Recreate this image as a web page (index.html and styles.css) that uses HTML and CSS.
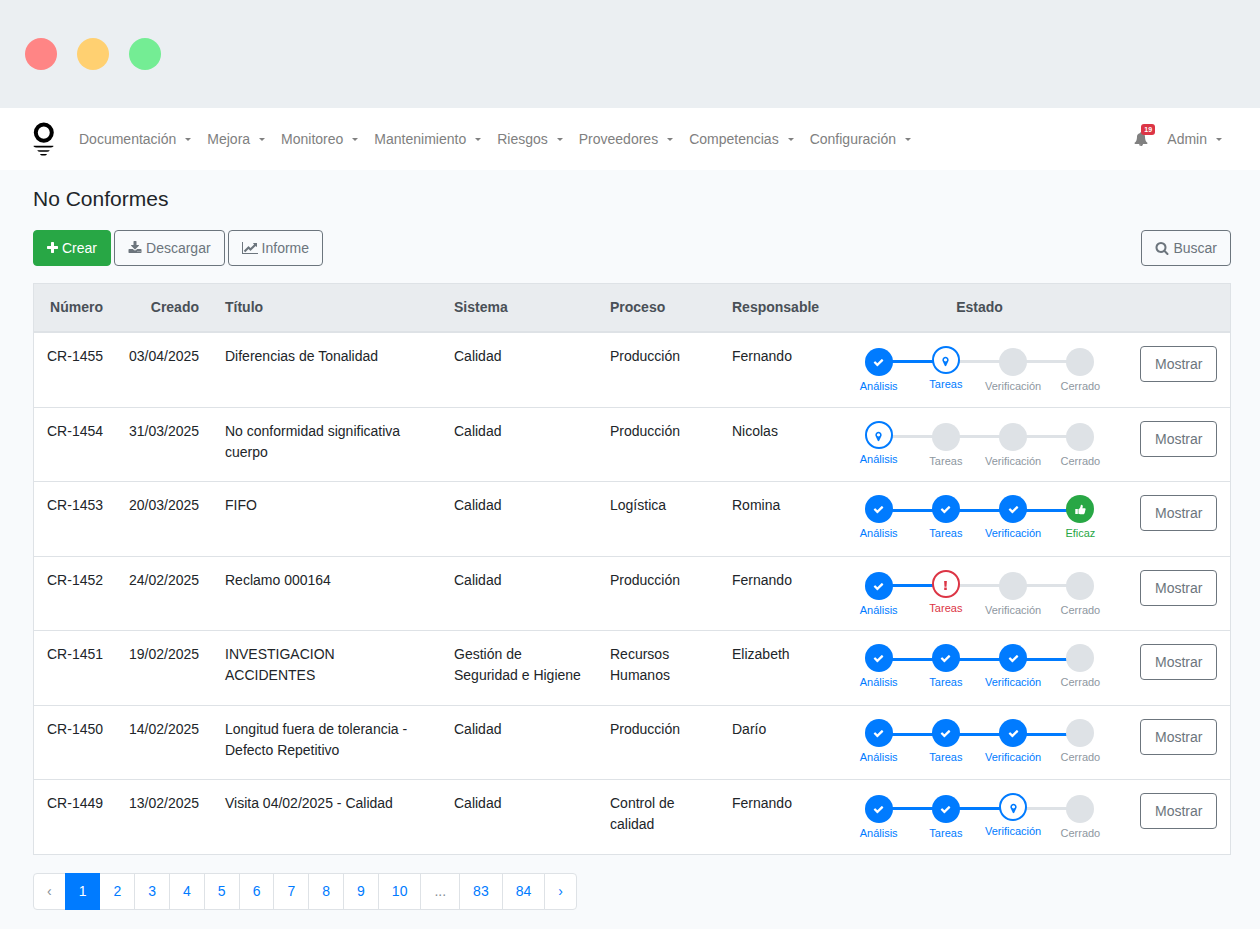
FILE: index.html
```html
<!DOCTYPE html>
<html lang="es">
<head>
<meta charset="UTF-8">
<meta name="viewport" content="width=device-width, initial-scale=1.0">
<title>No Conformes</title>
<link rel="stylesheet" href="styles.css">
</head>
<body>

<!-- Icon set -->
<svg class="sprite" aria-hidden="true">
  <symbol id="plus" viewBox="192 0 1408 1792"><path d="M1600 736v192q0 40-28 68t-68 28h-416v416q0 40-28 68t-68 28h-192q-40 0-68-28t-28-68v-416h-416q-40 0-68-28t-28-68v-192q0-40 28-68t68-28h416v-416q0-40 28-68t68-28h192q40 0 68 28t28 68v416h416q40 0 68 28t28 68z"/></symbol>
  <symbol id="download" viewBox="0 0 1792 1792"><path d="M1344 1344q0-26-19-45t-45-19-45 19-19 45 19 45 45 19 45-19 19-45zm256 0q0-26-19-45t-45-19-45 19-19 45 19 45 45 19 45-19 19-45zm128-224v320q0 40-28 68t-68 28h-1472q-40 0-68-28t-28-68v-320q0-40 28-68t68-28h465l135 136q58 56 136 56t136-56l136-136h464q40 0 68 28t28 68zm-325-569q17 41-14 70l-448 448q-18 19-45 19t-45-19l-448-448q-31-29-14-70 17-39 59-39h256v-448q0-26 19-45t45-19h256q26 0 45 19t19 45v448h256q42 0 59 39z"/></symbol>
  <symbol id="chart" viewBox="0 0 2048 1792"><path d="M2048 1536v128h-2048v-1536h128v1408h1920zm-128-1248v435q0 21-19.5 29.5t-35.5-7.5l-121-121-633 633q-10 10-23 10t-23-10l-233-233-416 416-192-192 585-585q10-10 23-10t23 10l233 233 464-464-121-121q-16-16-7.5-35.5t29.5-19.500h435q14 0 23 9t9 23z"/></symbol>
  <symbol id="search" viewBox="0 0 1792 1792"><path d="M1216 832q0-185-131.5-316.5t-316.5-131.5-316.5 131.5-131.5 316.5 131.5 316.5 316.5 131.5 316.5-131.5 131.5-316.5zm512 832q0 52-38 90t-90 38q-54 0-90-38l-343-342q-179 124-399 124-143 0-273.5-55.5t-225-150-150-225-55.5-273.5 55.5-273.5 150-225 225-150 273.5-55.5 273.5 55.5 225 150 150 225 55.5 273.5q0 220-124 399l343 343q37 37 37 90z"/></symbol>
  <symbol id="check" viewBox="0 0 1792 1792"><path d="M1671 566q0 40-28 68l-724 724-136 136q-28 28-68 28t-68-28l-136-136-362-362q-28-28-28-68t28-68l136-136q28-28 68-28t68 28l294 295 656-657q28-28 68-28t68 28l136 136q28 28 28 68z"/></symbol>
  <symbol id="marker" viewBox="0 0 1792 1792"><path d="M1152 640q0-106-75-181t-181-75-181 75-75 181 75 181 181 75 181-75 75-181zm256 0q0 109-33 179l-364 774q-16 33-47.5 52t-67.5 19-67.5-19-46.5-52l-365-774q-33-70-33-179 0-212 150-362t362-150 362 150 150 362z"/></symbol>
  <symbol id="alert" viewBox="0 0 12 12"><path d="M4.500 1h3l-.4 6.300H4.900zM4.600 8.300h2.800V11H4.600z"/></symbol>
  <symbol id="thumb" viewBox="0 0 12 12"><path d="M.3 5.400h2.800v5.400H.3zM3.700 5.600C5 5 5.600 3.900 6 2.900 6.200 2.200 6.200.8 7 .8c1.200 0 1.500 1 1.500 1.900 0 .8-.3 1.300-.5 1.900h2.400c.7 0 1.200.5 1.200 1.100 0 .5-.2.800-.5 1 .3.500.2 1.200-.3 1.600.2.600 0 1.100-.4 1.400.1 1-.6 1.500-1.600 1.500H7.500c-1.400 0-2.600-.3-3.800-.6z"/></symbol>
  <symbol id="bell" viewBox="0 0 1792 1792"><path d="M912 1696q0-16-16-16-59 0-101.500-42.500t-42.500-101.500q0-16-16-16t-16 16q0 73 51.500 124.500t124.500 51.500q16 0 16-16zm816-288q0 52-38 90t-90 38h-448q0 106-75 181t-181 75-181-75-75-181h-448q-52 0-90-38t-38-90q50-42 91-88t85-119.500 74.500-158.500 50-206 19.500-260q0-152 117-282.500t307-158.500q-8-19-8-39 0-40 28-68t68-28 68 28 28 68q0 20-8 39 190 28 307 158.500t117 282.500q0 139 19.500 260t50 206 74.500 158.500 85 119.500 91 88z"/></symbol>
</svg>

<div class="window-bar">
  <span class="dot dot-red"></span>
  <span class="dot dot-yellow"></span>
  <span class="dot dot-green"></span>
</div>

<header class="navbar">
  <a class="brand" href="#" aria-label="Inicio">
    <svg width="21" height="34" viewBox="0 0 21 34">
      <ellipse cx="10.800" cy="10.600" rx="8" ry="8.200" fill="none" stroke="#000" stroke-width="4"/>
      <path d="M.8 23.800h19.400q.6 0 .1.600-.9 1.100-2.800 1.100h-14q-1.900 0-2.800-1.100-.5-.6.100-.6zM4.700 28.200h11.600q.6 0 .2.500-.8 1-2.300 1H6.800q-1.500 0-2.300-1-.4-.5.200-.5zM7.500 32.100h6q.7 0 .3.500-.7.900-1.800.9H9q-1.100 0-1.800-.9-.4-.5.300-.5z"/>
    </svg>
  </a>
  <nav class="menu">
    <button type="button" class="menu-item">Documentación</button>
    <button type="button" class="menu-item">Mejora</button>
    <button type="button" class="menu-item">Monitoreo</button>
    <button type="button" class="menu-item">Mantenimiento</button>
    <button type="button" class="menu-item">Riesgos</button>
    <button type="button" class="menu-item">Proveedores</button>
    <button type="button" class="menu-item">Competencias</button>
    <button type="button" class="menu-item">Configuración</button>
  </nav>
  <div class="user">
    <button type="button" class="bell" aria-label="Notificaciones">
      <svg class="icon"><use href="#bell"/></svg>
      <span class="badge">19</span>
    </button>
    <button type="button" class="menu-item">Admin</button>
  </div>
</header>

<main class="content">
  <h1>No Conformes</h1>

  <div class="toolbar">
    <button type="button" class="btn btn-success"><svg class="icon icon-narrow"><use href="#plus"/></svg>Crear</button>
    <button type="button" class="btn"><svg class="icon"><use href="#download"/></svg>Descargar</button>
    <button type="button" class="btn"><svg class="icon icon-wide"><use href="#chart"/></svg>Informe</button>
    <button type="button" class="btn btn-search"><svg class="icon"><use href="#search"/></svg>Buscar</button>
  </div>

  <table class="table">
    <colgroup>
      <col class="col-number">
      <col class="col-date">
      <col class="col-title">
      <col class="col-system">
      <col class="col-process">
      <col class="col-owner">
      <col class="col-status">
      <col class="col-action">
    </colgroup>
    <thead>
      <tr>
        <th class="right">Número</th>
        <th class="right">Creado</th>
        <th>Título</th>
        <th>Sistema</th>
        <th>Proceso</th>
        <th>Responsable</th>
        <th class="center">Estado</th>
        <td></td>
      </tr>
    </thead>
    <tbody>
      <tr>
        <td class="right">CR-1455</td>
        <td class="right">03/04/2025</td>
        <td>Diferencias de Tonalidad</td>
        <td>Calidad</td>
        <td>Producción</td>
        <td>Fernando</td>
        <td>
          <ol class="steps open">
            <li class="done"><span class="circle"><svg><use href="#check"/></svg></span>Análisis</li>
            <li class="current"><span class="circle"><svg><use href="#marker"/></svg></span>Tareas</li>
            <li><span class="circle"></span>Verificación</li>
            <li><span class="circle"></span>Cerrado</li>
          </ol>
        </td>
        <td><button type="button" class="btn">Mostrar</button></td>
      </tr>
      <tr>
        <td class="right">CR-1454</td>
        <td class="right">31/03/2025</td>
        <td>No conformidad significativa cuerpo</td>
        <td>Calidad</td>
        <td>Producción</td>
        <td>Nicolas</td>
        <td>
          <ol class="steps open">
            <li class="current"><span class="circle"><svg><use href="#marker"/></svg></span>Análisis</li>
            <li><span class="circle"></span>Tareas</li>
            <li><span class="circle"></span>Verificación</li>
            <li><span class="circle"></span>Cerrado</li>
          </ol>
        </td>
        <td><button type="button" class="btn">Mostrar</button></td>
      </tr>
      <tr>
        <td class="right">CR-1453</td>
        <td class="right">20/03/2025</td>
        <td>FIFO</td>
        <td>Calidad</td>
        <td>Logística</td>
        <td>Romina</td>
        <td>
          <ol class="steps">
            <li class="done"><span class="circle"><svg><use href="#check"/></svg></span>Análisis</li>
            <li class="done"><span class="circle"><svg><use href="#check"/></svg></span>Tareas</li>
            <li class="done"><span class="circle"><svg><use href="#check"/></svg></span>Verificación</li>
            <li class="effective"><span class="circle"><svg><use href="#thumb"/></svg></span>Eficaz</li>
          </ol>
        </td>
        <td><button type="button" class="btn">Mostrar</button></td>
      </tr>
      <tr>
        <td class="right">CR-1452</td>
        <td class="right">24/02/2025</td>
        <td>Reclamo 000164</td>
        <td>Calidad</td>
        <td>Producción</td>
        <td>Fernando</td>
        <td>
          <ol class="steps open">
            <li class="done"><span class="circle"><svg><use href="#check"/></svg></span>Análisis</li>
            <li class="current late"><span class="circle"><svg><use href="#alert"/></svg></span>Tareas</li>
            <li><span class="circle"></span>Verificación</li>
            <li><span class="circle"></span>Cerrado</li>
          </ol>
        </td>
        <td><button type="button" class="btn">Mostrar</button></td>
      </tr>
      <tr>
        <td class="right">CR-1451</td>
        <td class="right">19/02/2025</td>
        <td>INVESTIGACION ACCIDENTES</td>
        <td>Gestión de Seguridad e Higiene</td>
        <td>Recursos Humanos</td>
        <td>Elizabeth</td>
        <td>
          <ol class="steps">
            <li class="done"><span class="circle"><svg><use href="#check"/></svg></span>Análisis</li>
            <li class="done"><span class="circle"><svg><use href="#check"/></svg></span>Tareas</li>
            <li class="done"><span class="circle"><svg><use href="#check"/></svg></span>Verificación</li>
            <li><span class="circle"></span>Cerrado</li>
          </ol>
        </td>
        <td><button type="button" class="btn">Mostrar</button></td>
      </tr>
      <tr>
        <td class="right">CR-1450</td>
        <td class="right">14/02/2025</td>
        <td>Longitud fuera de tolerancia - Defecto Repetitivo</td>
        <td>Calidad</td>
        <td>Producción</td>
        <td>Darío</td>
        <td>
          <ol class="steps">
            <li class="done"><span class="circle"><svg><use href="#check"/></svg></span>Análisis</li>
            <li class="done"><span class="circle"><svg><use href="#check"/></svg></span>Tareas</li>
            <li class="done"><span class="circle"><svg><use href="#check"/></svg></span>Verificación</li>
            <li><span class="circle"></span>Cerrado</li>
          </ol>
        </td>
        <td><button type="button" class="btn">Mostrar</button></td>
      </tr>
      <tr>
        <td class="right">CR-1449</td>
        <td class="right">13/02/2025</td>
        <td>Visita 04/02/2025 - Calidad</td>
        <td>Calidad</td>
        <td>Control de calidad</td>
        <td>Fernando</td>
        <td>
          <ol class="steps open">
            <li class="done"><span class="circle"><svg><use href="#check"/></svg></span>Análisis</li>
            <li class="done"><span class="circle"><svg><use href="#check"/></svg></span>Tareas</li>
            <li class="current"><span class="circle"><svg><use href="#marker"/></svg></span>Verificación</li>
            <li><span class="circle"></span>Cerrado</li>
          </ol>
        </td>
        <td><button type="button" class="btn">Mostrar</button></td>
      </tr>
    </tbody>
  </table>

  <nav class="pagination" aria-label="Páginas">
    <span class="page disabled">‹</span>
    <a class="page active" href="#">1</a>
    <a class="page" href="#">2</a>
    <a class="page" href="#">3</a>
    <a class="page" href="#">4</a>
    <a class="page" href="#">5</a>
    <a class="page" href="#">6</a>
    <a class="page" href="#">7</a>
    <a class="page" href="#">8</a>
    <a class="page" href="#">9</a>
    <a class="page" href="#">10</a>
    <span class="page disabled">...</span>
    <a class="page" href="#">83</a>
    <a class="page" href="#">84</a>
    <a class="page" href="#">›</a>
  </nav>
</main>

</body>
</html>
```
FILE: styles.css
```css
* {
  box-sizing: border-box;
}

body {
  margin: 0;
  background-color: #f8fafc;
  color: #212529;
  font-family: "Liberation Sans", Arial, sans-serif;
  font-size: 14px;
  line-height: 21px;
}

button {
  font: inherit;
  cursor: pointer;
}

.sprite {
  display: none;
}

.icon {
  width: 14px;
  height: 14px;
  fill: currentColor;
}

.icon-narrow {
  width: 11px;
}

.icon-wide {
  width: 16px;
}

/* Window bar */
.window-bar {
  display: flex;
  align-items: center;
  gap: 20px;
  height: 108px;
  padding: 0 25px;
  background-color: #ebeff2;
}

.dot {
  width: 32px;
  height: 32px;
  border-radius: 50%;
}

.dot-red {
  background-color: #ff8585;
}

.dot-yellow {
  background-color: #ffd071;
}

.dot-green {
  background-color: #74ed94;
}

/* Navbar */
.navbar {
  display: flex;
  align-items: center;
  height: 62px;
  padding: 0 38px 0 33px;
  background-color: #fff;
}

.brand {
  display: flex;
  margin-right: 25px;
}

.menu {
  display: flex;
  gap: 16px;
}

.menu-item {
  padding: 0;
  border: none;
  background: none;
  color: #808080;
  white-space: nowrap;
}

.menu-item::after {
  content: "";
  display: inline-block;
  margin-left: 9px;
  vertical-align: 3px;
  border-top: 3px solid;
  border-left: 3px solid transparent;
  border-right: 3px solid transparent;
}

.user {
  display: flex;
  align-items: center;
  gap: 19px;
  margin-left: auto;
}

.bell {
  position: relative;
  display: flex;
  padding: 0;
  border: none;
  background: none;
  color: #808080;
}

.badge {
  position: absolute;
  top: -8px;
  left: 7px;
  padding: 0 3px;
  border-radius: 3px;
  background-color: #dc3545;
  color: #fff;
  font-size: 7px;
  font-weight: bold;
  line-height: 11px;
}

/* Page content */
.content {
  padding: 16px 29px 19px 33px;
}

h1 {
  margin: 0 0 18px;
  font-size: 21px;
  font-weight: normal;
  line-height: 26px;
}

.toolbar {
  display: flex;
  gap: 3px;
  margin-bottom: 17px;
}

.btn {
  display: inline-flex;
  align-items: center;
  gap: 4px;
  height: 36px;
  padding: 0 13px;
  border: 1px solid #6c757d;
  border-radius: 4px;
  background: none;
  color: #6c757d;
}

.btn-success {
  border-color: #28a745;
  background-color: #28a745;
  color: #fff;
}

.btn-search {
  margin-left: auto;
}

/* Table */
.table {
  width: 100%;
  margin-bottom: 18px;
  border: 1px solid #dee2e6;
  border-bottom: none;
  border-collapse: separate;
  border-spacing: 0;
  table-layout: fixed;
  background-color: #fff;
}

.col-number {
  width: 82px;
}

.col-date {
  width: 96px;
}

.col-title {
  width: 229px;
}

.col-system {
  width: 156px;
}

.col-process {
  width: 122px;
}

.col-owner {
  width: 113px;
}

.col-status {
  width: 295px;
}

.col-action {
  width: 103px;
}

th,
td {
  padding: 13px 13px 10px;
  border-bottom: 1px solid #dee2e6;
  text-align: left;
  vertical-align: top;
}

thead th,
thead td {
  padding-bottom: 13px;
  border-bottom-width: 2px;
  background-color: #e9ecef;
  color: #495057;
}

tbody td {
  height: 74px;
}

tbody tr:nth-child(odd) td {
  height: 75px;
}

td .btn {
  padding: 0 14px;
}

.right {
  text-align: right;
  white-space: nowrap;
}

.center {
  text-align: center;
}

/* Status steps */
.steps {
  display: flex;
  margin: 0;
  padding: 0;
  list-style: none;
}

.steps li {
  position: relative;
  display: flex;
  flex: 1;
  flex-direction: column;
  align-items: center;
  gap: 2px;
  color: #8e979f;
  font-size: 11px;
  line-height: 16px;
}

.steps.open li:not(.current) {
  padding-top: 2px;
}

/* Line to the next step */
.steps li:not(:last-child)::before {
  content: "";
  position: absolute;
  top: 14px;
  left: 50%;
  width: 100%;
  height: 3px;
  background-color: #dee2e6;
}

.steps li.done::before {
  background-color: #007bff;
}

.circle {
  position: relative;
  z-index: 1;
  display: flex;
  align-items: center;
  justify-content: center;
  width: 28px;
  height: 28px;
  border-radius: 50%;
  background-color: #dee2e6;
}

.circle svg {
  width: 11px;
  height: 11px;
  fill: currentColor;
}

.steps .done,
.steps .current {
  color: #007bff;
}

.done .circle {
  background-color: #007bff;
  color: #fff;
}

.current .circle {
  padding-top: 2px;
  border: 2px solid;
  background-color: #fff;
}

.steps .late {
  color: #dc3545;
}

.steps .effective {
  color: #28a745;
}

.effective .circle {
  background-color: #28a745;
  color: #fff;
}

/* Pagination */
.pagination {
  display: flex;
}

.page {
  height: 37px;
  margin-left: -1px;
  padding: 0 13px;
  border: 1px solid #dee2e6;
  background-color: #fff;
  color: #007bff;
  line-height: 35px;
  text-decoration: none;
}

.page:first-child {
  margin-left: 0;
  border-radius: 4px 0 0 4px;
}

.page:last-child {
  border-radius: 0 4px 4px 0;
}

.page.active {
  z-index: 1;
  border-color: #007bff;
  background-color: #007bff;
  color: #fff;
}

.page.disabled {
  color: #868e96;
}
```
